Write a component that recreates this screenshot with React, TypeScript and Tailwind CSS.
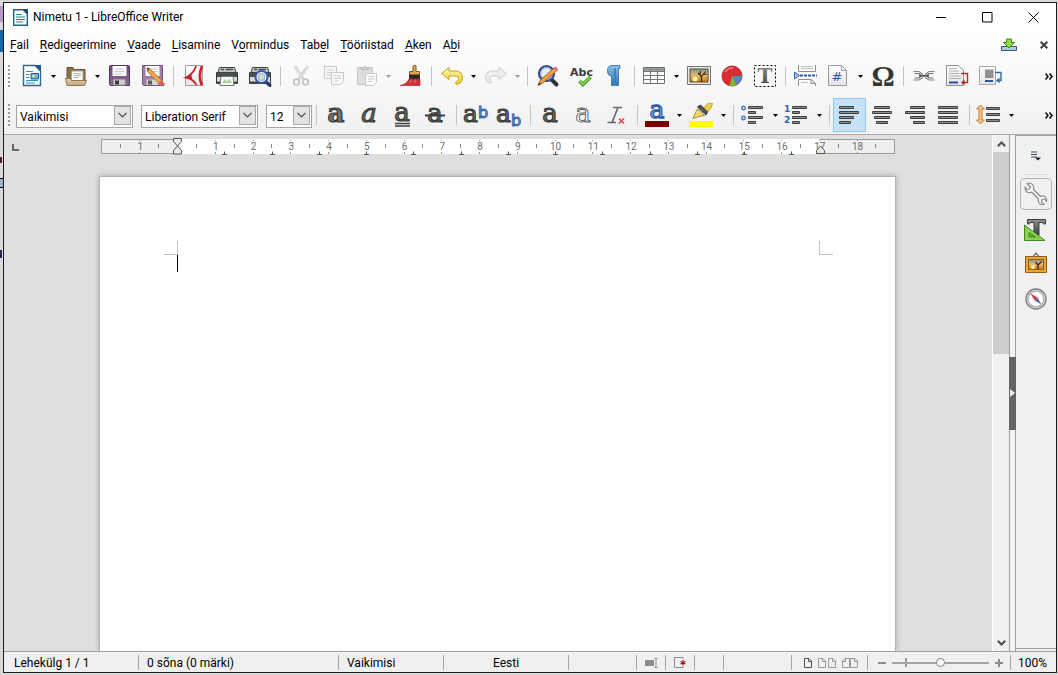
import type { ReactNode } from 'react'

const SERIF = 'DejaVu Serif, serif'
const SANS = 'DejaVu Sans, sans-serif'

function Icon({ children }: { children: ReactNode }) {
  return (
    <svg width="24" height="24" viewBox="0 0 24 24" fill="none" aria-hidden="true" className="shrink-0 overflow-visible">
      {children}
    </svg>
  )
}

// Gradients shared by all icons
function Gradients() {
  return (
    <svg width="0" height="0" className="absolute" aria-hidden="true">
      <defs>
        <linearGradient id="dark" x1="0" y1="0" x2="0" y2="1">
          <stop offset="0" stopColor="#8d918d" />
          <stop offset="1" stopColor="#3c3f3d" />
        </linearGradient>
        <linearGradient id="purple" x1="0" y1="0" x2="0" y2="1">
          <stop offset="0" stopColor="#6d4a78" />
          <stop offset="1" stopColor="#8c6a98" />
        </linearGradient>
        <linearGradient id="folder" x1="0" y1="0" x2="0" y2="1">
          <stop offset="0" stopColor="#e4d2b2" />
          <stop offset="1" stopColor="#c2a67a" />
        </linearGradient>
        <linearGradient id="paper" x1="0" y1="0" x2="0" y2="1">
          <stop offset="0" stopColor="#ffffff" />
          <stop offset="1" stopColor="#e4e4e4" />
        </linearGradient>
        <linearGradient id="sunset" x1="0" y1="0" x2="0" y2="1">
          <stop offset="0" stopColor="#7e97a0" />
          <stop offset="0.5" stopColor="#e8b765" />
          <stop offset="1" stopColor="#c9731c" />
        </linearGradient>
        <linearGradient id="gold" x1="0" y1="0" x2="0" y2="1">
          <stop offset="0" stopColor="#fdf6b4" />
          <stop offset="1" stopColor="#ecc91c" />
        </linearGradient>
        <linearGradient id="blue" x1="0" y1="0" x2="0" y2="1">
          <stop offset="0" stopColor="#8cbfe8" />
          <stop offset="1" stopColor="#2b74b4" />
        </linearGradient>
      </defs>
    </svg>
  )
}

const NewDoc = () => (
  <Icon>
    <path d="M3.500 1.500H15L20.500 7V21.500H3.500Z" fill="#fff" stroke="#2a6a92" strokeWidth="1.400" />
    <path d="M14.500 1H21V7.500Z" fill="#1d5c86" />
    <path d="M6 7.500H13M6 10.500H9.500M6 13.500H9.500M6 16.500H18M6 19H15" stroke="#3b88b8" strokeWidth="1.200" />
    <path d="M11 9.500H18.500V15H11Z" fill="#6fb1d8" stroke="#1d5c86" />
    <circle cx="13.500" cy="12" r="1.200" fill="#f4e9a0" />
  </Icon>
)

const OpenFolder = () => (
  <Icon>
    <path d="M3 18V3.500H9L10.500 5.500H21V17Z" fill="#8b7146" stroke="#6b5533" />
    <path d="M7.500 7H19V17H7.500Z" fill="#fafafa" stroke="#a9a291" />
    <path d="M9.500 9.500H17M9.500 11.500H17M9.500 13.500H15" stroke="#b5b5b5" />
    <path d="M1.500 14.500H6L7.500 16.500H22.500L20.500 21.500H3Z" fill="url(#folder)" stroke="#8f7650" />
  </Icon>
)

const Floppy = () => (
  <Icon>
    <path d="M1.500 2.500Q1.500 1.500 2.500 1.500H20.500Q21.500 1.500 21.500 2.500V21.500H2.500L1.500 20.500Z" fill="url(#purple)" stroke="#533660" />
    <path d="M4.500 2H18.500V12H4.500Z" fill="#fcfcfc" />
    <path d="M6.500 5H16.500M6.500 7.500H16.500M6.500 10H14" stroke="#c8c8c8" />
    <path d="M5.500 15.500H17V21H5.500Z" fill="#cfcfcf" stroke="#a7a0aa" />
    <path d="M7 16.500H11V20.500H7Z" fill="#3c3c3c" />
  </Icon>
)

const FloppyPencil = () => (
  <Icon>
    <path d="M1.500 1.500H21.500V21.500H2.500L1.500 20.500Z" fill="#9d7fa6" stroke="#715879" />
    <path d="M4.500 2H18.500V12H4.500Z" fill="#fafafa" />
    <path d="M6.500 5H17M6.500 7.500H17" stroke="#ccc" />
    <path d="M5.500 15.500H17V21H5.500Z" fill="#d5d5d5" />
    <path d="M7 16.500H11V20.500H7Z" fill="#5a5a5a" />
    <path d="M6 4L8.500 4.500L21.500 17L18.500 20L6.500 7.500Z" fill="#f0a54a" stroke="#a7682a" strokeWidth="0.800" />
    <path d="M6 4L8.500 4.500L7 7Z" fill="#493a2a" />
    <path d="M20 18.500L22 20.500" stroke="#d6605a" strokeWidth="3.500" strokeLinecap="round" />
  </Icon>
)

const Pdf = () => (
  <Icon>
    <path d="M3.500 1.500H20.500V21.500H3.500Z" fill="url(#paper)" stroke="#a2a2a2" />
    <path d="M14 2C12.500 7 10 10.500 4 13.500C9 14 12 17 14.500 21" stroke="#c8232c" strokeWidth="1.800" />
    <path d="M20 2C17.500 8 17 15 20 21.500" stroke="#c8232c" strokeWidth="2.600" />
    <path d="M4 13.500L9.500 10L10 15.500Z" fill="#c8232c" />
  </Icon>
)

const Printer = () => (
  <Icon>
    <path d="M4.500 3.500H19.500L21 8.500H3Z" fill="#c3c7c3" stroke="#3c4040" />
    <path d="M6 5.500H9M10.500 5.500H18" stroke="#4b4f4f" strokeWidth="1.400" />
    <path d="M1.500 8.500H22.500V19.500H1.500Z" fill="#d9dbd9" stroke="#343838" />
    <path d="M2 8.500H22V13H2Z" fill="#4b4f4f" />
    <path d="M2 17.500H22V20H2Z" fill="#3f4343" />
    <path d="M6 12.500H18L19 21.500H5Z" fill="#f8fbf6" stroke="#777" />
    <path d="M7 19L10 15L12 18L14 14.500L17 19Z" fill="#a9cf9a" />
  </Icon>
)

const PrintPreview = () => (
  <Icon>
    <path d="M4.500 3.500H19.500L21 8.500H3Z" fill="#c3c7c3" stroke="#3c4040" />
    <path d="M6 5.500H9M10.500 5.500H18" stroke="#4b4f4f" strokeWidth="1.400" />
    <path d="M1.500 8.500H22.500V19.500H1.500Z" fill="#d9dbd9" stroke="#343838" />
    <path d="M2 8.500H22V13H2Z" fill="#4b4f4f" />
    <path d="M2 17.500H19V20H2Z" fill="#3f4343" />
    <path d="M18 18L22 21.500" stroke="#26386b" strokeWidth="3" strokeLinecap="round" />
    <circle cx="13.500" cy="13" r="6" fill="#f2f6fb" stroke="#3b57a8" strokeWidth="2" />
    <circle cx="13.500" cy="13" r="3.500" fill="#cfe0d2" stroke="#8fa6d2" />
  </Icon>
)

const Cut = () => (
  <Icon>
    <path d="M6 2L15 16M19 2L9 16" stroke="#c9c9c9" strokeWidth="2.600" />
    <path d="M6 2L15 16M19 2L9 16" stroke="#eee" />
    <circle cx="7.500" cy="18" r="2.800" stroke="#c4c4c4" strokeWidth="1.800" />
    <circle cx="16.500" cy="18" r="2.800" stroke="#c4c4c4" strokeWidth="1.800" />
  </Icon>
)

const Copy = () => (
  <Icon>
    <path d="M2.500 2.500H14.500V14.500H2.500Z" fill="#f6f6f6" stroke="#c9c9c9" />
    <path d="M5 6H12M5 8.500H12M5 11H9" stroke="#cfcfcf" />
    <path d="M9.500 8.500H21.500V17.500L18.500 20.500H9.500Z" fill="#f8f8f8" stroke="#c9c9c9" />
    <path d="M12 12H19M12 14.500H19M12 17H16" stroke="#cfcfcf" />
  </Icon>
)

const Paste = () => (
  <Icon>
    <path d="M2.500 3.500H17.500V20.500H2.500Z" fill="#dedede" stroke="#c6c6c6" />
    <path d="M6 5.500V3.500H8.500Q10 0.500 11.500 3.500H14V5.500Z" fill="#cdcdcd" stroke="#bdbdbd" />
    <path d="M10.500 9.500H21.500V18.500L18.500 21.500H10.500Z" fill="#f9f9f9" stroke="#c9c9c9" />
    <path d="M13 12.500H19.500M13 15H19.500M13 17.500H17" stroke="#cdcdcd" />
  </Icon>
)

const Brush = () => (
  <Icon>
    <path d="M14 2Q15.500 0.500 17 2V7.500H20.500V12H10.500V7.500H14Z" fill="#e3a552" stroke="#8a5c25" />
    <path d="M10.500 11H20.500V14.500H10.500Z" fill="#2c2c2c" stroke="#2c2c2c" />
    <path d="M10 15H21V21.500H1Q8 20 10 15Z" fill="#cf2f35" stroke="#a81f26" strokeWidth="0.600" />
    <path d="M12.500 15.500L10.500 19M16 15.500V19" stroke="#eb8084" />
  </Icon>
)

const Undo = () => (
  <Icon>
    <path
      d="M9 3.500V7H16Q22.500 7.500 22.500 14Q22 19 17 20.500Q15.500 20.500 15.500 18.500Q18.500 17 18.500 14.500Q18 12 15.500 12H9V15.500L1.500 9.500Z"
      fill="url(#gold)"
      stroke="#c3a51f"
      strokeLinejoin="round"
    />
  </Icon>
)

const Redo = () => (
  <Icon>
    <path
      d="M15 3.500V7H8Q1.500 7.500 1.500 14Q2 18 5.500 19Q7 19 7 17.500Q5.500 16 5.500 14.500Q6 12 8.500 12H15V15.500L22.500 9.500Z"
      fill="#eee"
      stroke="#cacaca"
      strokeLinejoin="round"
    />
  </Icon>
)

const FindReplace = () => (
  <Icon>
    <path d="M16 16L20.500 20.500" stroke="#2d3238" strokeWidth="4" strokeLinecap="round" />
    <circle cx="10.500" cy="9.500" r="7.500" fill="#e9eef7" stroke="#34488c" strokeWidth="2.200" />
    <circle cx="10.500" cy="9.500" r="5.800" stroke="#8aa0cf" />
    <path d="M18.500 3.500L21.500 6L7 19L2 21.500L4 16.500Z" fill="#f0a043" stroke="#9b5c23" strokeWidth="0.900" />
    <path d="M2 21.500L3 18.500L5 20Z" fill="#333" />
    <path d="M17.500 4.500L20 7L22 5L19.500 2.500Z" fill="#e0707a" />
  </Icon>
)

const Spelling = () => (
  <Icon>
    <text x="1" y="12" fontFamily={SANS} fontSize="11" fontWeight="bold" fill="#3a3a3a">
      Abc
    </text>
    <path d="M10.500 17L14 20.500L21.500 13" stroke="#3f8f1b" strokeWidth="3.600" />
    <path d="M10.800 17L14 20.300L21.200 13.200" stroke="#8bdb4e" strokeWidth="1.800" />
  </Icon>
)

const Pilcrow = () => (
  <Icon>
    <path
      d="M18 1.500V4.500H16.500V21.500H13.500V4.500H12.500V21.500H9.500V12Q5.500 12 5.500 6.500Q5.500 1.500 10 1.500Z"
      fill="url(#blue)"
      stroke="#3779b0"
      strokeWidth="0.900"
    />
  </Icon>
)

const TableGrid = () => (
  <Icon>
    <path d="M0.500 3.500H21.500V19.500H0.500Z" fill="#fdfdfd" stroke="#6c706c" />
    <path d="M1 4H21V8H1Z" fill="#979b97" />
    <path d="M0.500 7.500H21.500M0.500 11.500H21.500M0.500 15.500H21.500M7.500 3.500V19.500M14.500 3.500V19.500" stroke="#777b77" />
  </Icon>
)

const Picture = () => (
  <Icon>
    <path d="M0.500 2.500H23.500V20.500H0.500Z" fill="#e5e5e5" stroke="#747474" />
    <path d="M3 5H21V18H3Z" fill="url(#sunset)" stroke="#5b4a2b" />
    <circle cx="8" cy="15" r="2.500" fill="#fff1a8" />
    <path d="M14.500 18V12.500L11 9M14.500 12.500L18.500 7.500M13 11L13.500 7M16.500 10L19.500 10.500" stroke="#332414" strokeWidth="1.200" />
  </Icon>
)

const Chart = () => (
  <Icon>
    <circle cx="12" cy="12" r="10" fill="#dc2a30" stroke="#a3191e" strokeWidth="0.800" />
    <path d="M12 12L21.900 12A10 10 0 0 1 16.500 21Z" fill="#5a86c0" />
    <path d="M12 12L16.500 21A10 10 0 0 1 9.500 21.700Z" fill="#79b92f" />
    <path d="M5 8Q8 3.500 13 4" stroke="#f08084" strokeWidth="1.500" />
  </Icon>
)

const TextFrame = () => (
  <Icon>
    <rect x="1.500" y="1.500" width="21" height="21" stroke="#000" strokeDasharray="2 2" />
    <text x="12" y="19" textAnchor="middle" fontFamily={SERIF} fontSize="20" fontWeight="bold" fill="url(#dark)">
      T
    </text>
  </Icon>
)

const PageBreak = () => (
  <Icon>
    <path d="M4.500 1V7.500H21.500V1M4.500 22V15.500H17L21.500 19.500V22" fill="#fafafa" stroke="#8c8c8c" />
    <path d="M7 2.500H19M7 4.500H19M7 18.500H14" stroke="#bdbdbd" />
    <path d="M17 15.500V19.500H21.500" stroke="#8c8c8c" />
    <path d="M0.500 8L5.500 11.500L0.500 15Z" fill="#9fc3e8" stroke="#3a6ba5" />
    <path d="M6 11.500H23" stroke="#2f5f9e" strokeWidth="2" strokeDasharray="3 1" />
  </Icon>
)

const Field = () => (
  <Icon>
    <path d="M1.500 1.500H14.500L19.500 6.500V21.500H1.500Z" fill="url(#paper)" stroke="#9a9a9a" />
    <path d="M14.500 1.500V6.500H19.500" stroke="#9a9a9a" />
    <text x="10" y="17" textAnchor="middle" fontFamily={SANS} fontSize="13" fill="#2c5aa0">
      #
    </text>
  </Icon>
)

const Omega = () => (
  <Icon>
    <text x="12" y="22" textAnchor="middle" fontFamily="Liberation Serif, serif" fontSize="29" fontWeight="bold" fill="#333635">
      Ω
    </text>
  </Icon>
)

const Link = () => (
  <Icon>
    <path d="M1.500 7.500H7L11 10.500M1.500 16H7L11 13.500M22.500 7.500H17L13 10.500M22.500 16H17L13 13.500" stroke="#858585" strokeWidth="1.200" />
    <path d="M2.500 9.500H7L9.500 11.800L7 14H2.500M21.500 9.500H17L14.500 11.800L17 14H21.500" stroke="#707070" strokeWidth="1.200" />
    <path d="M7 11.800H17" stroke="#555" strokeWidth="1.800" />
  </Icon>
)

const Footnote = () => (
  <Icon>
    <path d="M1.500 1.500H13L18.500 6.500V21.500H1.500Z" fill="url(#paper)" stroke="#8f8f8f" />
    <path d="M4 4.500H12M4 7H14M4 9.500H14M4 12H16M4 14.500H16" stroke="#b0b0b0" />
    <path d="M4 18.500H13" stroke="#2a4a9a" strokeWidth="2" />
    <path d="M16 9.500H22.500V18.500H18" stroke="#b8292f" strokeWidth="1.400" />
    <path d="M19.500 15.500L16 18.500L19.500 21.500Z" fill="#b8292f" />
  </Icon>
)

const Endnote = () => (
  <Icon>
    <path d="M1.500 2.500H17.500V20.500H1.500Z" fill="url(#paper)" stroke="#a5a5a5" />
    <path d="M7 5.500H15.500V14H7Z" fill="#8e918e" />
    <path d="M7 17H15" stroke="#2a5a9a" strokeWidth="2" />
    <path d="M17 8.500H23V16.500H20" stroke="#2f69a6" strokeWidth="1.400" />
    <path d="M21.500 13.500L18 16.500L21.500 19.500Z" fill="#2f69a6" />
  </Icon>
)

type LetterProps = { italic?: boolean; outline?: boolean; line?: 'under' | 'strike'; heavy?: boolean }

function LetterA({ italic, outline, line, heavy }: LetterProps) {
  return (
    <Icon>
      <text
        x="11"
        y={line === 'under' ? 18 : 19}
        textAnchor="middle"
        fontFamily={SERIF}
        fontSize="26"
        fontStyle={italic ? 'italic' : 'normal'}
        fontWeight={heavy ? 'bold' : 'normal'}
        fill={outline ? '#fff' : '#6f7370'}
        stroke={outline ? '#555' : '#383b39'}
        strokeWidth={outline ? 0.9 : 1.2}
      >
        a
      </text>
      {line === 'under' && <path d="M4 20.500H19M4 23H19" stroke="#3d403e" strokeWidth="1.400" />}
      {line === 'strike' && <path d="M1 12.500H21" stroke="#3d403e" strokeWidth="2" />}
    </Icon>
  )
}

function Script({ sub }: { sub?: boolean }) {
  return (
    <Icon>
      <text x="-2" y="19" fontFamily={SERIF} fontSize="25" fill="#6f7370" stroke="#383b39" strokeWidth="1.200">
        a
      </text>
      <text x="13" y={sub ? 23 : 15} fontFamily={SANS} fontSize="16" fill="#b5cff0" stroke="#2f5fa5" strokeWidth="1">
        b
      </text>
    </Icon>
  )
}

const ClearFormat = () => (
  <Icon>
    <path d="M8 4.500H17M2.500 19.500H11M13 4.500L7 19.500" stroke="#6a6a6a" strokeWidth="1.700" />
    <path d="M14 15.500L19 20.500M19 15.500L14 20.500" stroke="#de4352" strokeWidth="1.600" />
  </Icon>
)

const FontColor = () => (
  <Icon>
    <text x="11" y="15" textAnchor="middle" fontFamily={SERIF} fontSize="25" fill="#8fb5e6" stroke="#2d5ea3" strokeWidth="1.300">
      a
    </text>
    <rect x="-1" y="18" width="24" height="6" fill="#7b0000" />
  </Icon>
)

const Highlight = () => (
  <Icon>
    <path d="M13 5L18 0.500H22.500Q22 5 18 9Z" fill="#e9cc4f" stroke="#c9ad3c" />
    <path d="M7.500 4L10.500 2L17.500 9L16 12Z" fill="#55585a" stroke="#333" />
    <path d="M7.500 6L14.500 12.500Q9 13 3 15.500Q5 10 7.500 6Z" fill="#f1db6e" stroke="#a88f2c" />
    <rect x="-1" y="18" width="24" height="6" fill="#ffff00" />
  </Icon>
)

function Bars({ rows }: { rows: number[][] }) {
  return (
    <>
      {rows.map(([x, y, w]) => (
        <g key={y}>
          <rect x={x} y={y} width={w} height="3" rx="1" fill="#3b3e3c" />
          <rect x={x + 1} y={y + 1} width={w - 2} height="1" fill="#8d918d" />
        </g>
      ))}
    </>
  )
}

const Bullets = () => (
  <Icon>
    <circle cx="1.500" cy="5" r="1.800" fill="#c6ddf2" stroke="#3b76b4" strokeWidth="1.300" />
    <circle cx="1.500" cy="15" r="1.800" fill="#c6ddf2" stroke="#3b76b4" strokeWidth="1.300" />
    <Bars rows={[[6, 3, 15], [6, 8, 8], [6, 13, 15], [6, 18, 8]]} />
  </Icon>
)

const Numbering = () => (
  <Icon>
    <text x="-2" y="9" fontFamily={SANS} fontSize="9" fontWeight="bold" fill="#2d64a8">
      1
    </text>
    <text x="-2" y="20" fontFamily={SANS} fontSize="9" fontWeight="bold" fill="#2d64a8">
      2
    </text>
    <Bars rows={[[6, 3, 15], [6, 8, 8], [6, 13, 15], [6, 18, 8]]} />
  </Icon>
)

const AlignLeft = () => (
  <Icon>
    <Bars rows={[[1, 3, 15], [1, 8, 20], [1, 13, 15], [1, 18, 12]]} />
  </Icon>
)

const AlignCenter = () => (
  <Icon>
    <Bars rows={[[3, 3, 16], [1, 8, 20], [3, 13, 16], [5, 18, 12]]} />
  </Icon>
)

const AlignRight = () => (
  <Icon>
    <Bars rows={[[6, 3, 15], [1, 8, 20], [6, 13, 15], [9, 18, 12]]} />
  </Icon>
)

const Justify = () => (
  <Icon>
    <Bars rows={[[1, 3, 20], [1, 8, 20], [1, 13, 20], [1, 18, 20]]} />
  </Icon>
)

const LineSpacing = () => (
  <Icon>
    <path d="M2.500 2L6.500 6H4V17H6.500L2.500 21L-1.500 17H1V6H-1.500Z" fill="#f9c28c" stroke="#d07a2c" />
    <Bars rows={[[8, 4, 14], [8, 10, 14], [8, 16, 14]]} />
  </Icon>
)

function Caret({ disabled, label }: { disabled?: boolean; label: string }) {
  return (
    <button aria-label={label} disabled={disabled} className="flex h-8 w-[11px] items-center justify-center">
      <svg width="5" height="3" viewBox="0 0 5 3" aria-hidden="true">
        <path d="M0 0H5L2.500 3Z" fill={disabled ? '#9a9a9a' : '#000'} />
      </svg>
    </button>
  )
}

function Tool({ label, icon, active, disabled }: { label: string; icon: ReactNode; active?: boolean; disabled?: boolean }) {
  return (
    <button
      title={label}
      aria-label={label}
      disabled={disabled}
      className={
        active
          ? 'flex h-[34px] w-[33px] items-center justify-center border border-[#92c8ee] bg-[#c5e2f8]'
          : 'flex h-[34px] w-[33px] items-center justify-center'
      }
    >
      {icon}
    </button>
  )
}

const Separator = () => <span className="ml-1 mr-[3px] h-5 w-px shrink-0 bg-[#c4c4c4]" />

const Grip = () => <span className="mr-[5px] h-[22px] shrink-0 border-l-2 border-dotted border-[#9b9b9b]" />

function More() {
  return (
    <button aria-label="Rohkem" className="ml-auto mr-[3px] flex h-8 w-2 items-center">
      <svg width="8" height="7" viewBox="0 0 8 7" aria-hidden="true">
        <path d="M0.500 0.500L3 3.500L0.500 6.500M4.500 0.500L7 3.500L4.500 6.500" stroke="#000" strokeWidth="1.500" fill="none" />
      </svg>
    </button>
  )
}

function Combo({ label, value, width }: { label: string; value: string; width: string }) {
  return (
    <div className={`relative mr-2 h-[23px] shrink-0 ${width}`}>
      <select
        aria-label={label}
        defaultValue={value}
        className="h-full w-full appearance-none border border-[#a5a5a5] bg-white pl-[3px] text-[12px] leading-4 text-black"
      >
        <option>{value}</option>
      </select>
      <span className="pointer-events-none absolute bottom-0.5 right-0.5 top-0.5 flex w-[17px] items-center justify-center border border-[#a8a8a8] bg-[#e3e3e3]">
        <svg width="9" height="6" viewBox="0 0 9 6" aria-hidden="true">
          <path d="M0.500 0.800L4.500 4.800L8.500 0.800" stroke="#4a4a4a" strokeWidth="1.200" fill="none" />
        </svg>
      </span>
    </div>
  )
}

// [text before the access key, access key, rest]
const menus = [
  ['', 'F', 'ail'],
  ['', 'R', 'edigeerimine'],
  ['', 'V', 'aade'],
  ['', 'L', 'isamine'],
  ['V', 'o', 'rmindus'],
  ['Tab', 'e', 'l'],
  ['', 'T', 'ööriistad'],
  ['', 'A', 'ken'],
  ['A', 'b', 'i'],
]

function TitleBar() {
  return (
    <header className="flex h-7 shrink-0 items-center bg-white pl-[9px]">
      <svg width="15" height="17" viewBox="0 0 15 17" aria-hidden="true">
        <path d="M0.700 0.700H10L14.300 5V16.300H0.700Z" fill="#fff" stroke="#1f6488" strokeWidth="1.400" />
        <path d="M9.500 0H15V5.500Z" fill="#17506f" />
        <path d="M3 5.500H8.500M3 8H12M3 10.500H12M3 13H10" stroke="#2c7ba6" strokeWidth="1.200" />
      </svg>
      <h1 className="ml-[5px] text-[12px] leading-4 text-black">Nimetu 1 - LibreOffice Writer</h1>
      <div className="ml-auto flex">
        <button aria-label="Minimeeri" className="flex h-7 w-[46px] items-center justify-center">
          <svg width="11" height="11" viewBox="0 0 11 11" aria-hidden="true">
            <path d="M0 5.500H10" stroke="#000" />
          </svg>
        </button>
        <button aria-label="Maksimeeri" className="flex h-7 w-[46px] items-center justify-center">
          <svg width="11" height="11" viewBox="0 0 11 11" aria-hidden="true">
            <path d="M0.500 0.500H10V10H0.500Z" stroke="#000" fill="none" />
          </svg>
        </button>
        <button aria-label="Sulge" className="flex h-7 w-[46px] items-center justify-center">
          <svg width="11" height="11" viewBox="0 0 11 11" aria-hidden="true">
            <path d="M0.500 0.500L10.500 10.500M10.500 0.500L0.500 10.500" stroke="#000" />
          </svg>
        </button>
      </div>
    </header>
  )
}

function MenuBar() {
  return (
    <nav className="flex h-7 shrink-0 items-center pl-1.5">
      <div className="flex gap-[11px]">
        {menus.map(([before, key, after]) => (
          <button key={before + key + after} className="text-[12px] leading-4 text-black">
            {before}
            <span className="underline underline-offset-2">{key}</span>
            {after}
          </button>
        ))}
      </div>
      <button aria-label="Uuendus on saadaval" className="ml-auto">
        <svg width="16" height="14" viewBox="0 0 16 14" aria-hidden="true">
          <path d="M0.500 8.500H15.500V12.500H0.500Z" fill="#a9cde0" stroke="#34597a" />
          <path d="M5.500 1H10.500V4.500H13.500L8 10L2.500 4.500H5.500Z" fill="#8fdc3f" stroke="#3b8a14" />
        </svg>
      </button>
      <button aria-label="Sulge dokument" className="ml-[23px] mr-2">
        <svg width="8" height="8" viewBox="0 0 8 8" aria-hidden="true">
          <path d="M0.700 0.700L7.300 7.300M7.300 0.700L0.700 7.300" stroke="#3f3f3f" strokeWidth="2" />
        </svg>
      </button>
    </nav>
  )
}

function StandardToolbar() {
  return (
    <div role="toolbar" aria-label="Standardriba" className="flex h-[34px] shrink-0 items-center pl-1">
      <Grip />
      <Tool label="Uus" icon={<NewDoc />} />
      <Caret label="Uus: valikud" />
      <Tool label="Ava" icon={<OpenFolder />} />
      <Caret label="Ava: valikud" />
      <Tool label="Salvesta" icon={<Floppy />} />
      <Tool label="Salvesta kui" icon={<FloppyPencil />} />
      <Separator />
      <Tool label="Ekspordi PDF-ina" icon={<Pdf />} />
      <Tool label="Prindi" icon={<Printer />} />
      <Tool label="Printimise eelvaade" icon={<PrintPreview />} />
      <Separator />
      <Tool label="Lõika" icon={<Cut />} disabled />
      <Tool label="Kopeeri" icon={<Copy />} disabled />
      <Tool label="Aseta" icon={<Paste />} disabled />
      <Caret label="Aseta: valikud" disabled />
      <Tool label="Klooni vormindus" icon={<Brush />} />
      <Separator />
      <Tool label="Võta tagasi" icon={<Undo />} />
      <Caret label="Võta tagasi: valikud" />
      <Tool label="Tee uuesti" icon={<Redo />} disabled />
      <Caret label="Tee uuesti: valikud" disabled />
      <Separator />
      <Tool label="Otsimine ja asendamine" icon={<FindReplace />} />
      <Tool label="Õigekirja kontroll" icon={<Spelling />} />
      <Tool label="Vormindusmärgid" icon={<Pilcrow />} />
      <Separator />
      <Tool label="Lisa tabel" icon={<TableGrid />} />
      <Caret label="Tabel: valikud" />
      <Tool label="Lisa pilt" icon={<Picture />} />
      <Tool label="Lisa diagramm" icon={<Chart />} />
      <Tool label="Lisa tekstikast" icon={<TextFrame />} />
      <Separator />
      <Tool label="Lisa leheküljepiir" icon={<PageBreak />} />
      <Tool label="Lisa väli" icon={<Field />} />
      <Caret label="Väli: valikud" />
      <Tool label="Lisa erimärk" icon={<Omega />} />
      <Separator />
      <Tool label="Lisa hüperlink" icon={<Link />} />
      <Tool label="Lisa allmärkus" icon={<Footnote />} />
      <Tool label="Lisa lõpumärkus" icon={<Endnote />} />
      <More />
    </div>
  )
}

function FormattingToolbar() {
  return (
    <div role="toolbar" aria-label="Vormindusriba" className="mt-[3px] flex h-[39px] shrink-0 items-center border-b border-[#adadad] pl-1">
      <Grip />
      <div className="ml-px flex">
        <Combo label="Lõigustiil" value="Vaikimisi" width="w-[117px]" />
        <Combo label="Font" value="Liberation Serif" width="w-[117px]" />
        <Combo label="Fondi suurus" value="12" width="w-[46px]" />
      </div>
      <span className="-ml-1 mr-[3px] h-5 w-px bg-[#c4c4c4]" />
      <Tool label="Rasvane" icon={<LetterA heavy />} />
      <Tool label="Kaldkiri" icon={<LetterA italic />} />
      <Tool label="Allajoonitud" icon={<LetterA line="under" />} />
      <Tool label="Läbikriipsutatud" icon={<LetterA line="strike" />} />
      <Separator />
      <Tool label="Ülaindeks" icon={<Script />} />
      <Tool label="Alaindeks" icon={<Script sub />} />
      <Separator />
      <Tool label="Vari" icon={<LetterA />} />
      <Tool label="Kontuur" icon={<LetterA outline />} />
      <Tool label="Eemalda vormindus" icon={<ClearFormat />} />
      <Separator />
      <Tool label="Fondi värv" icon={<FontColor />} />
      <Caret label="Fondi värv: valikud" />
      <Tool label="Esiletõstmine" icon={<Highlight />} />
      <Caret label="Esiletõstmine: valikud" />
      <Separator />
      <Tool label="Täpploend" icon={<Bullets />} />
      <Caret label="Täpploend: valikud" />
      <Tool label="Nummerdus" icon={<Numbering />} />
      <Caret label="Nummerdus: valikud" />
      <Separator />
      <Tool label="Joonda vasakule" icon={<AlignLeft />} active />
      <Tool label="Joonda keskele" icon={<AlignCenter />} />
      <Tool label="Joonda paremale" icon={<AlignRight />} />
      <Tool label="Rööpjoondus" icon={<Justify />} />
      <Separator />
      <Tool label="Reavahe" icon={<LineSpacing />} />
      <Caret label="Reavahe: valikud" />
      <More />
    </div>
  )
}

// Horizontal ruler: zero sits 78px from its left edge, one centimetre is 37.75px
const ORIGIN = 78
const CM = 37.75

function Ruler() {
  const numbers = Array.from({ length: 20 }, (_, i) => i - 1).filter((n) => n !== 0)
  const halves = Array.from({ length: 21 }, (_, i) => i - 1.5)
  const tabs = Array.from({ length: 13 }, (_, i) => (i + 1) * 1.252)
  return (
    <svg width="797" height="18" viewBox="-1 0 797 18" aria-label="Joonlaud" role="img" className="shrink-0 overflow-visible">
      <rect x="1.500" y="3.500" width="793" height="14" fill="#efefef" stroke="#9c9c9c" />
      <rect x={ORIGIN} y="3" width={CM * 17} height="15" fill="#fff" />
      {numbers.filter((n) => n < 19).map((n) => (
        <g key={n}>
          <path d={`M${Math.round(ORIGIN + n * CM) - 0.5} 4V5M${Math.round(ORIGIN + n * CM) - 0.5} 16V18`} stroke="#999" />
          <text x={ORIGIN + n * CM} y="14" textAnchor="middle" fontFamily="Roboto, sans-serif" fontSize="10" fill="#6e6e6e">
            {Math.abs(n)}
          </text>
        </g>
      ))}
      {halves.filter((n) => n < 19).map((n) => (
        <path key={n} d={`M${Math.round(ORIGIN + n * CM) - 0.5} 8V12`} stroke="#888" />
      ))}
      {tabs.map((n) => (
        <path key={n} d={`M${Math.round(ORIGIN + n * CM) - 3} 18.500h5m-2.500 0v-3`} stroke="#555" fill="none" />
      ))}
      <path d="M73.500 2.500H81.500V5.500L77.500 10L73.500 5.500Z" fill="#e8e8e8" stroke="#555" />
      <path d="M73.500 18V14.500L77.500 10L81.500 14.500V18Z" fill="#e8e8e8" stroke="#555" />
      <path d="M716.500 17.500V14.500L720.500 10L724.500 14.500V17.500Z" fill="#e8e8e8" stroke="#555" />
    </svg>
  )
}

function DocumentArea() {
  return (
    <main className="flex min-w-0 flex-1 flex-col overflow-hidden bg-[#dfdfdf] pr-px">
      <div className="flex h-[41px] shrink-0 items-start pt-px">
        <div className="flex-1">
          <div className="ml-2 mt-2 size-[7px] border-b-2 border-l-2 border-[#666]" />
        </div>
        <Ruler />
        <div className="flex-1" />
      </div>
      <article className="mx-auto flex w-[797px] flex-1 flex-col border border-b-0 border-[#b4b4b4] bg-white pl-16 pr-[62px] pt-16 shadow-[0_0_6px_rgba(0,0,0,0.25)]">
        <div className="flex justify-between">
          <span className="size-3.5 border-b border-r border-[#c0c0c0]" />
          <span className="size-3.5 border-b border-l border-[#c0c0c0]" />
        </div>
        <span className="ml-[13px] h-[17px] w-px bg-black" />
      </article>
    </main>
  )
}

function ScrollBar() {
  return (
    <div className="flex w-[17px] shrink-0 flex-col border-l border-white bg-[#f0f0f0]">
      <button aria-label="Keri üles" className="flex h-[17px] items-center justify-center">
        <svg width="9" height="6" viewBox="0 0 9 6" aria-hidden="true">
          <path d="M0.800 5.200L4.500 1.500L8.200 5.200" stroke="#4d4d4d" strokeWidth="2" fill="none" />
        </svg>
      </button>
      <div className="flex-1">
        <div className="h-[42%] bg-[#cdcdcd]" />
      </div>
      <button aria-label="Keri alla" className="flex h-[17px] items-center justify-center">
        <svg width="9" height="6" viewBox="0 0 9 6" aria-hidden="true">
          <path d="M0.800 0.800L4.500 4.500L8.200 0.800" stroke="#4d4d4d" strokeWidth="2" fill="none" />
        </svg>
      </button>
    </div>
  )
}

function SideBar() {
  return (
    <aside className="mb-0.5 flex w-10 shrink-0 flex-col items-center border-b border-t border-[#a0a0a0] bg-[#f0f0f0]">
      <button aria-label="Külgriba sätted" className="mt-[15px]">
        <svg width="10" height="10" viewBox="0 0 10 10" aria-hidden="true">
          <path d="M0 1H6M0 3.500H6M0 6H6" stroke="#3c4660" strokeWidth="1.200" />
          <path d="M4 6.500H10L7 9.500Z" fill="#111a30" />
        </svg>
      </button>
      <span className="mb-[3px] mt-[13px] h-px w-6 bg-[#dcdcdc]" />
      <button aria-label="Omadused" className="flex size-8 items-center justify-center rounded border border-[#b5b5b5]">
        <Icon>
          <path
            d="M3 1.500L6.500 5L5.500 7L3 7.500L1 5Q1 9.500 4 10.500Q6 11 7.500 10L14.500 17Q13.500 21 17 22.500L20 22.500L17.500 20L18 17.500L20.500 17L22.500 19.500Q23 15.500 20 14Q18 13.500 16.500 14.500L9.500 7.500Q10.500 3 7 1.500Q5 0.500 3 1.500Z"
            fill="#f7f7f7"
            stroke="#8b8b8b"
            strokeWidth="1.200"
            strokeLinejoin="round"
          />
        </Icon>
      </button>
      <button aria-label="Stiilid" className="mt-2">
        <Icon>
          <path d="M3.500 1.500H21.500V6H19.500L18.500 4.500H15V17.500H10V4.500H6.500L5.500 6H3.500Z" fill="url(#dark)" stroke="#3b3e3c" />
          <path d="M0.500 7V22.500H21Z" fill="#8fd14e" stroke="#3e8a1e" />
          <path d="M5 14.500V19H11.500Z" fill="#62a832" stroke="#3e8a1e" />
        </Icon>
      </button>
      <button aria-label="Galerii" className="mt-2.5">
        <Icon>
          <path d="M9 4.500L12 1L15 4.500" stroke="#777" strokeWidth="1.200" />
          <path d="M1.500 4.500H22.500V20.500H1.500Z" fill="#e9a53c" stroke="#935c10" />
          <path d="M4.500 7.500H19.500V17.500H4.500Z" fill="url(#sunset)" stroke="#935c10" />
          <circle cx="9" cy="15" r="2" fill="#fff0a0" />
          <path d="M14 17V13L11.500 10M14 13L17.500 9.500" stroke="#3a2713" strokeWidth="1.300" />
        </Icon>
      </button>
      <button aria-label="Navigaator" className="mt-[11px]">
        <Icon>
          <circle cx="12" cy="12" r="10" fill="#f4f4f4" stroke="#7f7f7f" strokeWidth="1.400" />
          <circle cx="12" cy="12" r="8" fill="#fff" stroke="#b0b0b0" strokeWidth="1.600" />
          <path d="M6.500 6.500L13.500 10.500L10.500 13.500Z" fill="#d63b3f" />
          <path d="M17.500 17.500L13.500 10.500L10.500 13.500Z" fill="#5a6ba8" />
        </Icon>
      </button>
    </aside>
  )
}

const StatusLine = () => <span className="my-0.5 w-px shrink-0 bg-[#a6a6a6]" />

function StatusBar() {
  return (
    <footer className="flex h-[21px] shrink-0 border-t border-[#a0a0a0] bg-[#f0f0f0] pt-px text-[12px] leading-5 text-black">
      <div className="flex w-[134px] shrink-0 items-center pl-2.5">Lehekülg 1 / 1</div>
      <StatusLine />
      <div className="flex w-[199px] shrink-0 items-center pl-2">0 sõna (0 märki)</div>
      <StatusLine />
      <div className="flex w-[104px] shrink-0 items-center pl-2">Vaikimisi</div>
      <StatusLine />
      <div className="flex w-[124px] shrink-0 items-center justify-center">Eesti</div>
      <StatusLine />
      <div className="min-w-0 flex-1" />
      <StatusLine />
      <div className="flex w-7 shrink-0 items-center justify-center">
        <svg width="13" height="10" viewBox="0 0 13 10" aria-label="Lisamisrežiim" role="img">
          <path d="M0 2H9V8H0Z" fill="#8c8c8c" />
          <path d="M9.500 0.500H12.500M11 0.500V9.500M9.500 9.500H12.500" stroke="#8c8c8c" fill="none" />
        </svg>
      </div>
      <StatusLine />
      <div className="flex w-7 shrink-0 items-center justify-center">
        <svg width="12" height="12" viewBox="0 0 12 12" aria-label="Dokumenti on muudetud" role="img">
          <path d="M9 2V0.500H0.500V10.500H9V9" stroke="#8c8c8c" fill="none" />
          <path d="M9 3V8.500M6.500 4.500L11.500 7M11.500 4.500L6.500 7" stroke="#a31922" strokeWidth="1.200" />
        </svg>
      </div>
      <StatusLine />
      <div className="w-7 shrink-0" />
      <StatusLine />
      <div className="w-[67px] shrink-0" />
      <StatusLine />
      <div className="flex w-[75px] shrink-0 items-center gap-1.5 pl-3">
        <button aria-label="Üks lehekülg">
          <svg width="8" height="10" viewBox="0 0 8 10" aria-hidden="true">
            <path d="M0.500 0.500H5L7.500 3V9.500H0.500ZM4.500 0.500V3.500H7.500" stroke="#505050" fill="none" />
          </svg>
        </button>
        <button aria-label="Mitu lehekülge">
          <svg width="18" height="10" viewBox="0 0 18 10" aria-hidden="true">
            <path d="M0.500 0.500H5L7.500 3V9.500H0.500ZM4.500 0.500V3.500H7.500M10.500 0.500H15L17.500 3V9.500H10.500ZM14.500 0.500V3.500H17.500" stroke="#9a9a9a" fill="none" />
          </svg>
        </button>
        <button aria-label="Raamatuvaade">
          <svg width="16" height="10" viewBox="0 0 16 10" aria-hidden="true">
            <path d="M7.500 0.500H3L0.500 3V9.500H7.500ZM3.500 0.500V3.500H0.500M8.500 0.500H13L15.500 3V9.500H8.500ZM12.500 0.500V3.500H15.500" stroke="#9a9a9a" fill="none" />
          </svg>
        </button>
      </div>
      <StatusLine />
      <div className="flex w-[142px] shrink-0 items-center pl-2.5">
        <button aria-label="Vähenda">
          <svg width="8" height="8" viewBox="0 0 8 8" aria-hidden="true">
            <path d="M0 4H8" stroke="#8c8c8c" strokeWidth="2" />
          </svg>
        </button>
        <div className="relative ml-1.5 flex items-center">
          <span className="absolute left-[13px] h-[9px] w-0.5 bg-[#999]" />
          <input
            type="range"
            min="0"
            max="100"
            defaultValue="50"
            aria-label="Suurendus"
            className="relative h-2.5 w-[97px] appearance-none bg-transparent [&::-webkit-slider-runnable-track]:h-0.5 [&::-webkit-slider-runnable-track]:bg-[#a3a3a3] [&::-webkit-slider-thumb]:-mt-1 [&::-webkit-slider-thumb]:size-[9px] [&::-webkit-slider-thumb]:appearance-none [&::-webkit-slider-thumb]:rounded-full [&::-webkit-slider-thumb]:border [&::-webkit-slider-thumb]:border-[#808080] [&::-webkit-slider-thumb]:bg-white"
          />
        </div>
        <button aria-label="Suurenda" className="ml-1.5">
          <svg width="8" height="8" viewBox="0 0 8 8" aria-hidden="true">
            <path d="M0 4H8M4 0V8" stroke="#8c8c8c" strokeWidth="2" />
          </svg>
        </button>
      </div>
      <StatusLine />
      <div className="flex w-[45px] shrink-0 items-center pl-[7px]">100%</div>
    </footer>
  )
}

function App() {
  return (
    <div className="flex h-screen overflow-hidden bg-[#d9d9d9] font-[Roboto,sans-serif]">
      <Gradients />
      {/* Sliver of the window behind */}
      <div className="flex w-[3px] shrink-0 flex-col">
        <span className="mt-1.5 h-4 bg-[#b49bc6]" />
        <span className="mt-2 h-[22px] bg-[#1766ac]" />
        <span className="mt-[105px] h-1.5 w-0.5 bg-[#4a2030]" />
        <span className="mt-[15px] h-2.5 border-y border-black bg-[#9fb3bd]" />
        <span className="mt-[62px] h-2 w-0.5 bg-[#2a2450]" />
      </div>
      <div className="mb-0.5 mr-px mt-0.5 flex min-w-0 flex-1 flex-col border border-[#1c1c1c] bg-[#f0f0f0]">
        <TitleBar />
        <div className="flex shrink-0 flex-col bg-linear-to-b from-white to-[#f0f0f0]">
          <MenuBar />
          <StandardToolbar />
          <FormattingToolbar />
        </div>
        <div className="flex min-h-0 flex-1">
          <DocumentArea />
          <ScrollBar />
          <div className="flex w-[7px] shrink-0 items-center border-x border-[#a0a0a0] bg-[#f4f4f4]">
            <button aria-label="Peida külgriba" className="-mx-px flex h-[73px] w-[7px] shrink-0 items-center justify-center bg-[#646464]">
              <svg width="5" height="8" viewBox="0 0 5 8" aria-hidden="true">
                <path d="M0 0L5 4L0 8Z" fill="#f0f0f0" />
              </svg>
            </button>
          </div>
          <SideBar />
        </div>
        <StatusBar />
      </div>
    </div>
  )
}

export default App
